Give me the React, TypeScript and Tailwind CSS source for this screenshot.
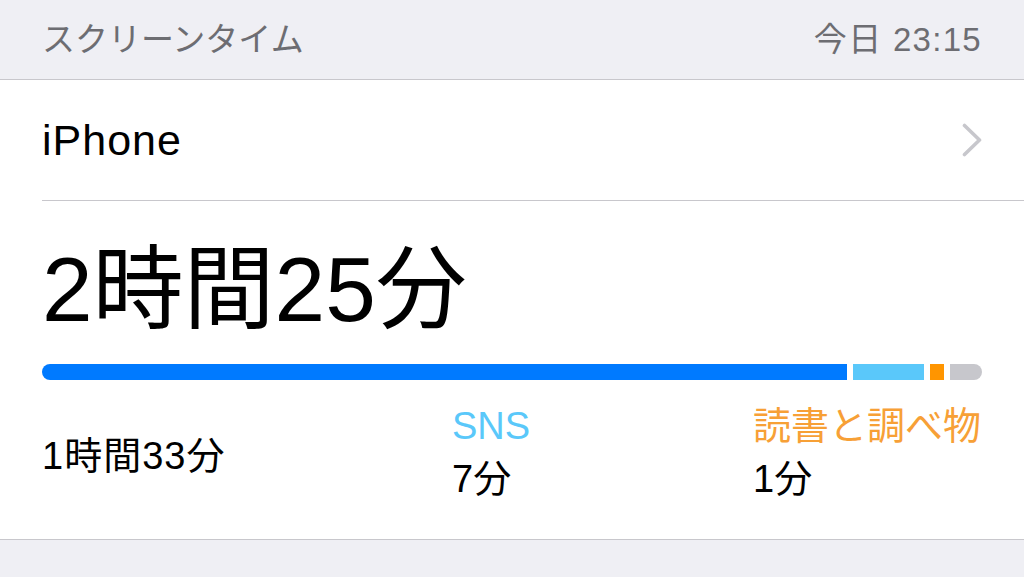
import React from 'react';

type Category = {
  label: string;
  minutes: string;
  color: string;
};

const categories: Category[] = [
  { label: 'SNS', minutes: '7分', color: 'text-[#5ac8fa]' },
  { label: '読書と調べ物', minutes: '1分', color: 'text-[#f7a036]' },
];

const Chevron: React.FC = () => (
  <svg width="20" height="34" viewBox="0 0 20 34" fill="none">
    <polyline
      points="2.5,2.5 17.5,17 2.5,31.5"
      stroke="#c7c7cc"
      strokeWidth="3.6"
      strokeLinecap="round"
      strokeLinejoin="round"
    />
  </svg>
);

const App: React.FC = () => {
  return (
    <div className="w-full h-[577px] bg-[#efeff4] overflow-hidden font-['Liberation_Sans','Noto_Sans_CJK_JP',sans-serif] text-black">
      {/* section header */}
      <div className="h-[80px] flex items-center justify-between px-[42px] text-[33px] text-[#6d6d72] border-b border-[#c8c7cc]">
        <span>スクリーンタイム</span>
        <span className="tracking-[1.3px]">今日 23:15</span>
      </div>

      <div className="bg-white pl-[42px] border-b border-[#c8c7cc]">
        {/* device row */}
        <div className="h-[121px] flex items-center justify-between pr-[42px] border-b border-[#c8c7cc]">
          <span className="text-[43px] tracking-[1px]">iPhone</span>
          <Chevron />
        </div>

        {/* total for today */}
        <div className="pr-[42px]">
          <div className="pt-[43px] text-[91px] leading-none">2時間25分</div>

          <div className="mt-[29px] flex gap-[6px] h-[16px]">
            <div className="flex-1 bg-[#007aff] rounded-l-full" />
            <div className="w-[71px] bg-[#5ac8fa]" />
            <div className="w-[14px] bg-[#ff9500]" />
            <div className="w-[32px] bg-[#c7c7cc] rounded-r-full" />
          </div>

          <div className="h-[159px] pt-[20px] grid grid-cols-[410px_301px_1fr] text-[38px] leading-[53px]">
            <div className="self-start mt-[30px] tracking-[1px]">1時間33分</div>
            {categories.map((c) => (
              <div key={c.label} className="flex flex-col">
                <span className={c.color}>{c.label}</span>
                <span>{c.minutes}</span>
              </div>
            ))}
          </div>
        </div>
      </div>
    </div>
  );
};

export default App;
